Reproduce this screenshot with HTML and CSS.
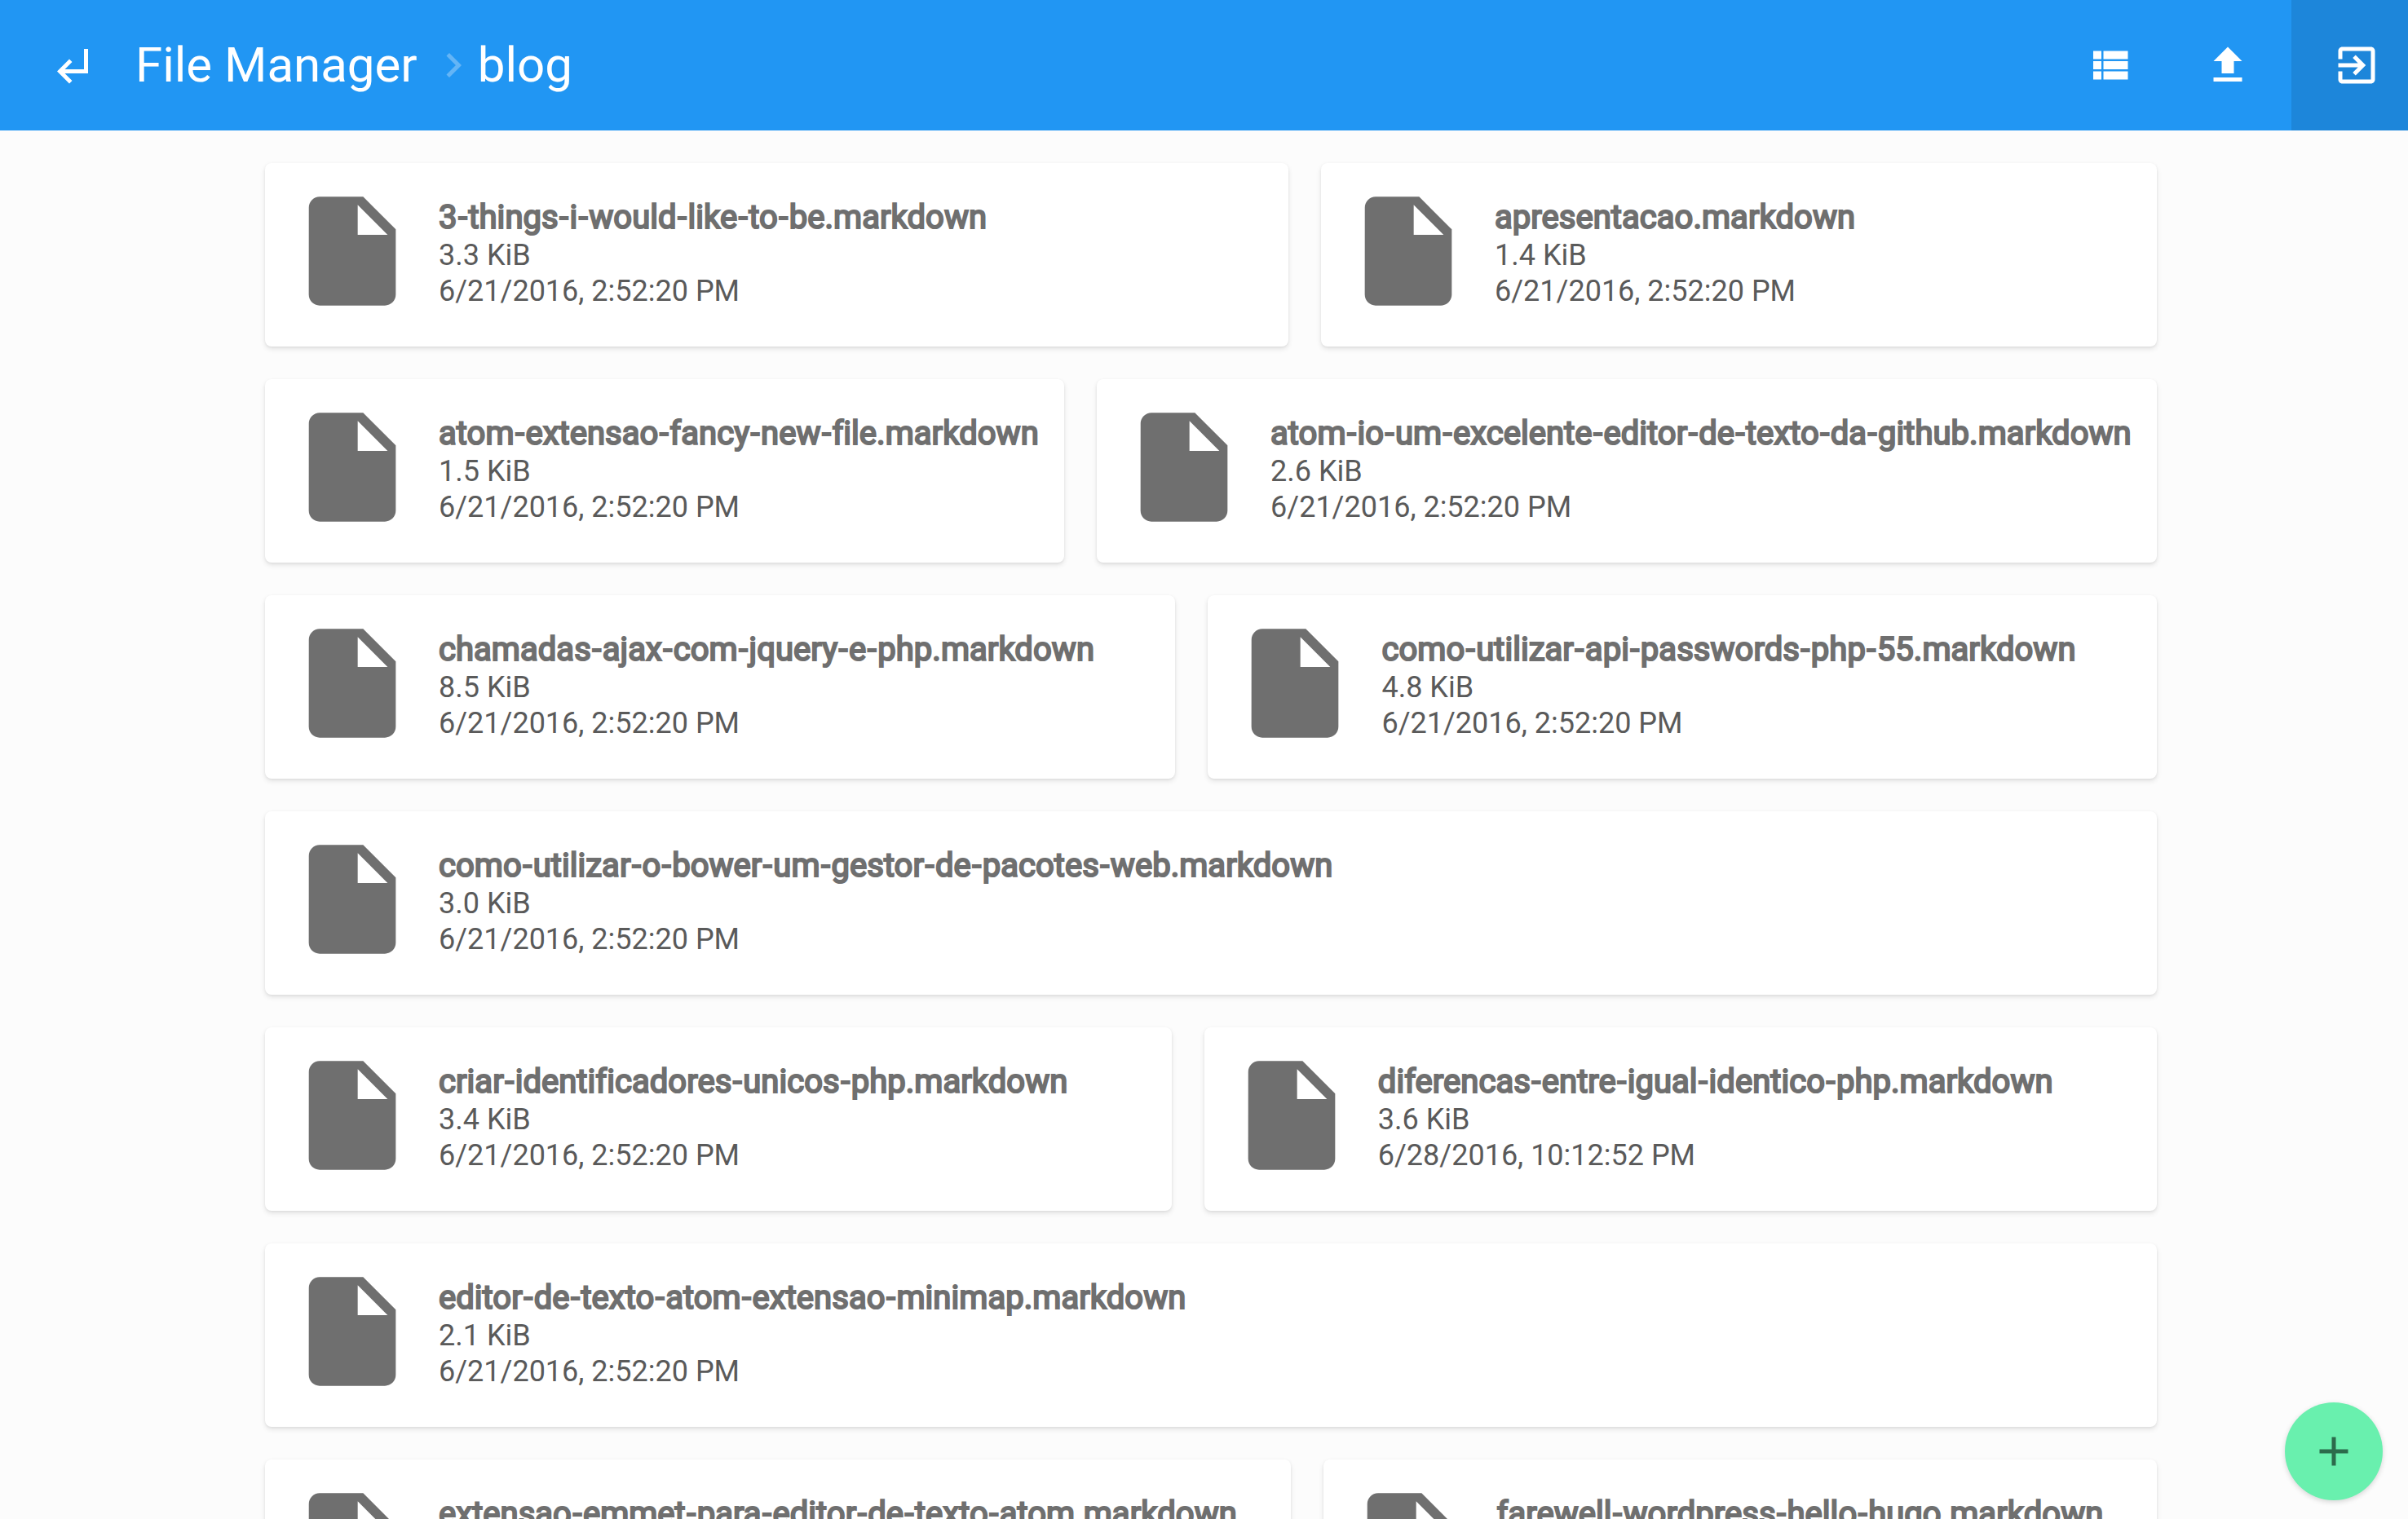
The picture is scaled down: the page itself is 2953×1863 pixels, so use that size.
FILE: index.html
```html
<!DOCTYPE html>
<html>
<head>
	<title>File Manager</title>
	<meta charset="utf-8">
	<link rel="stylesheet" href="styles.css">
</head>
<body>
<header class="topbar">
	<a class="back">
		<svg class="icon" viewBox="0 0 60 60"><path d="M48 10h-5v25H19.500l9-9-3.500-3.500L10 37.500l15 15 3.500-3.500-9-9H48z"/></svg>
	</a>
	<div class="crumbs">
		<span>File Manager</span>
		<svg class="sep" viewBox="0 0 24 24"><path d="M10 6L8.590 7.410 13.170 12l-4.580 4.590L10 18l6-6z"/></svg>
		<span>blog</span>
	</div>
	<div class="actions">
		<a class="action">
			<svg class="icon" viewBox="0 0 24 24"><path d="M4 14h4v-4H4v4zm0 5h4v-4H4v4zM4 9h4V5H4v4zm5 5h12v-4H9v4zm0 5h12v-4H9v4zM9 5v4h12V5H9z"/></svg>
		</a>
		<a class="action">
			<svg class="icon" viewBox="0 0 24 24"><path d="M9 16h6v-6h4l-7-7-7 7h4v6zm-4 2h14v2H5v-2z"/></svg>
		</a>
		<a class="action active">
			<svg class="icon" viewBox="0 0 24 24"><path d="M10.09 15.59L11.5 17l5-5-5-5-1.41 1.41L12.67 11H3v2h9.67l-2.58 2.59zM19 3H5c-1.11 0-2 .9-2 2v4h2V5h14v14H5v-4H3v4c0 1.1.89 2 2 2h14c1.1 0 2-.9 2-2V5c0-1.1-.9-2-2-2z"/></svg>
		</a>
	</div>
</header>

<main class="listing">
	<div class="item">
		<svg class="file" viewBox="0 0 24 24"><path d="M6 2c-1.1 0-1.99.9-1.99 2L4 20c0 1.1.89 2 1.99 2H18c1.1 0 2-.9 2-2V8l-6-6H6zm7 7V3.5L18.5 9H13z"/></svg>
		<div class="info">
			<h2>3<b>-</b>things<b>-</b>i<b>-</b>would<b>-</b>like<b>-</b>to<b>-</b>be.markdown</h2>
			<p>3.3 KiB</p>
			<p>6/21/2016, 2:52:20 PM</p>
		</div>
	</div>
	<div class="item">
		<svg class="file" viewBox="0 0 24 24"><path d="M6 2c-1.1 0-1.99.9-1.99 2L4 20c0 1.1.89 2 1.99 2H18c1.1 0 2-.9 2-2V8l-6-6H6zm7 7V3.5L18.5 9H13z"/></svg>
		<div class="info">
			<h2>apresentacao.markdown</h2>
			<p>1.4 KiB</p>
			<p>6/21/2016, 2:52:20 PM</p>
		</div>
	</div>
	<div class="item">
		<svg class="file" viewBox="0 0 24 24"><path d="M6 2c-1.1 0-1.99.9-1.99 2L4 20c0 1.1.89 2 1.99 2H18c1.1 0 2-.9 2-2V8l-6-6H6zm7 7V3.5L18.5 9H13z"/></svg>
		<div class="info">
			<h2>atom<b>-</b>extensao<b>-</b>fancy<b>-</b>new<b>-</b>file.markdown</h2>
			<p>1.5 KiB</p>
			<p>6/21/2016, 2:52:20 PM</p>
		</div>
	</div>
	<div class="item">
		<svg class="file" viewBox="0 0 24 24"><path d="M6 2c-1.1 0-1.99.9-1.99 2L4 20c0 1.1.89 2 1.99 2H18c1.1 0 2-.9 2-2V8l-6-6H6zm7 7V3.5L18.5 9H13z"/></svg>
		<div class="info">
			<h2>atom<b>-</b>io<b>-</b>um<b>-</b>excelente<b>-</b>editor<b>-</b>de<b>-</b>texto<b>-</b>da<b>-</b>github.markdown</h2>
			<p>2.6 KiB</p>
			<p>6/21/2016, 2:52:20 PM</p>
		</div>
	</div>
	<div class="item">
		<svg class="file" viewBox="0 0 24 24"><path d="M6 2c-1.1 0-1.99.9-1.99 2L4 20c0 1.1.89 2 1.99 2H18c1.1 0 2-.9 2-2V8l-6-6H6zm7 7V3.5L18.5 9H13z"/></svg>
		<div class="info">
			<h2>chamadas<b>-</b>ajax<b>-</b>com<b>-</b>jquery<b>-</b>e<b>-</b>php.markdown</h2>
			<p>8.5 KiB</p>
			<p>6/21/2016, 2:52:20 PM</p>
		</div>
	</div>
	<div class="item">
		<svg class="file" viewBox="0 0 24 24"><path d="M6 2c-1.1 0-1.99.9-1.99 2L4 20c0 1.1.89 2 1.99 2H18c1.1 0 2-.9 2-2V8l-6-6H6zm7 7V3.5L18.5 9H13z"/></svg>
		<div class="info">
			<h2>como<b>-</b>utilizar<b>-</b>api<b>-</b>passwords<b>-</b>php<b>-</b>55.markdown</h2>
			<p>4.8 KiB</p>
			<p>6/21/2016, 2:52:20 PM</p>
		</div>
	</div>
	<div class="item">
		<svg class="file" viewBox="0 0 24 24"><path d="M6 2c-1.1 0-1.99.9-1.99 2L4 20c0 1.1.89 2 1.99 2H18c1.1 0 2-.9 2-2V8l-6-6H6zm7 7V3.5L18.5 9H13z"/></svg>
		<div class="info">
			<h2>como<b>-</b>utilizar<b>-</b>o<b>-</b>bower<b>-</b>um<b>-</b>gestor<b>-</b>de<b>-</b>pacotes<b>-</b>web.markdown</h2>
			<p>3.0 KiB</p>
			<p>6/21/2016, 2:52:20 PM</p>
		</div>
	</div>
	<div class="item">
		<svg class="file" viewBox="0 0 24 24"><path d="M6 2c-1.1 0-1.99.9-1.99 2L4 20c0 1.1.89 2 1.99 2H18c1.1 0 2-.9 2-2V8l-6-6H6zm7 7V3.5L18.5 9H13z"/></svg>
		<div class="info">
			<h2>criar<b>-</b>identificadores<b>-</b>unicos<b>-</b>php.markdown</h2>
			<p>3.4 KiB</p>
			<p>6/21/2016, 2:52:20 PM</p>
		</div>
	</div>
	<div class="item">
		<svg class="file" viewBox="0 0 24 24"><path d="M6 2c-1.1 0-1.99.9-1.99 2L4 20c0 1.1.89 2 1.99 2H18c1.1 0 2-.9 2-2V8l-6-6H6zm7 7V3.5L18.5 9H13z"/></svg>
		<div class="info">
			<h2>diferencas<b>-</b>entre<b>-</b>igual<b>-</b>identico<b>-</b>php.markdown</h2>
			<p>3.6 KiB</p>
			<p>6/28/2016, 10:12:52 PM</p>
		</div>
	</div>
	<div class="item">
		<svg class="file" viewBox="0 0 24 24"><path d="M6 2c-1.1 0-1.99.9-1.99 2L4 20c0 1.1.89 2 1.99 2H18c1.1 0 2-.9 2-2V8l-6-6H6zm7 7V3.5L18.5 9H13z"/></svg>
		<div class="info">
			<h2>editor<b>-</b>de<b>-</b>texto<b>-</b>atom<b>-</b>extensao<b>-</b>minimap.markdown</h2>
			<p>2.1 KiB</p>
			<p>6/21/2016, 2:52:20 PM</p>
		</div>
	</div>
	<div class="item">
		<svg class="file" viewBox="0 0 24 24"><path d="M6 2c-1.1 0-1.99.9-1.99 2L4 20c0 1.1.89 2 1.99 2H18c1.1 0 2-.9 2-2V8l-6-6H6zm7 7V3.5L18.5 9H13z"/></svg>
		<div class="info">
			<h2>extensao<b>-</b>emmet<b>-</b>para<b>-</b>editor<b>-</b>de<b>-</b>texto<b>-</b>atom.markdown</h2>
			<p>2.3 KiB</p>
			<p>6/21/2016, 2:52:20 PM</p>
		</div>
	</div>
	<div class="item">
		<svg class="file" viewBox="0 0 24 24"><path d="M6 2c-1.1 0-1.99.9-1.99 2L4 20c0 1.1.89 2 1.99 2H18c1.1 0 2-.9 2-2V8l-6-6H6zm7 7V3.5L18.5 9H13z"/></svg>
		<div class="info">
			<h2>farewell<b>-</b>wordpress<b>-</b>hello<b>-</b>hugo.markdown</h2>
			<p>1.9 KiB</p>
			<p>6/21/2016, 2:52:20 PM</p>
		</div>
	</div>
</main>

<a class="fab">
	<svg class="icon" viewBox="0 0 24 24"><path d="M19 13h-6v6h-2v-6H5v-2h6V5h2v6h6v2z"/></svg>
</a>
</body>
</html>
```

FILE: styles.css
```css
*{
	margin: 0px;
	padding: 0px;
	box-sizing: border-box;
}
html, body{
	height: 100%;
	overflow: hidden;
}
body{
	background-color: #fcfcfc;
	font-family: Roboto, sans-serif;
	color: #6f6f6f;
}
.icon{
	display: block;
	width: 60px;
	height: 60px;
	fill: currentColor;
}
.topbar{
	display: flex;
	align-items: center;
	height: 160px;
	background-color: #2196f3;
	color: #fff;
}
.back{
	padding-left: 60px;
	width: 166px;
}
.crumbs{
	display: flex;
	align-items: center;
	padding-bottom: 2px;
	font-size: 60px;
	font-weight: 400;
}
.sep{
	width: 60px;
	height: 60px;
	margin: 2px 0 0 14px;
	fill: rgba(255,255,255,.3);
}
.actions{
	display: flex;
	margin-left: auto;
	height: 100%;
}
.action{
	display: flex;
	align-items: center;
	width: 145px;
	padding-left: 50px;
}
.action.active{
	width: 143px;
	margin-left: 13px;
	background-color: rgba(0,0,0,.1);
}
.listing{
	display: flex;
	flex-wrap: wrap;
	gap: 40px;
	width: 2320px;
	margin: 40px 0 0 325px;
}
.item{
	flex: 1 1 auto;
	display: flex;
	align-items: flex-start;
	height: 225px;
	padding: 28px 26px 0 27px;
	background-color: #fff;
	border-radius: 8px;
	box-shadow: 0 3px 6px rgba(0,0,0,.1), 0 1px 3px rgba(0,0,0,.06);
}
.file{
	flex: none;
	width: 160px;
	height: 160px;
	margin-right: 26px;
	fill: #6f6f6f;
}
.info h2{
	font-size: 40px;
	font-weight: 400;
	line-height: 46.500px;
	letter-spacing: .04px;
	-webkit-text-stroke: 2.1px #6f6f6f;
	white-space: nowrap;
	margin-top: 16px;
}
.info h2 b{
	font-weight: 400;
	margin: 0 1.400px;
}
.info p{
	font-size: 36px;
	font-weight: 400;
	line-height: 44.500px;
	color: #5a5a5a;
	white-space: nowrap;
}
.fab{
	position: fixed;
	right: 31px;
	bottom: 23px;
	display: flex;
	align-items: center;
	justify-content: center;
	width: 120px;
	height: 120px;
	border-radius: 50%;
	background-color: #69f0ae;
	color: #2c6b4c;
	box-shadow: 0 2px 6px rgba(0,0,0,.16);
}
```
